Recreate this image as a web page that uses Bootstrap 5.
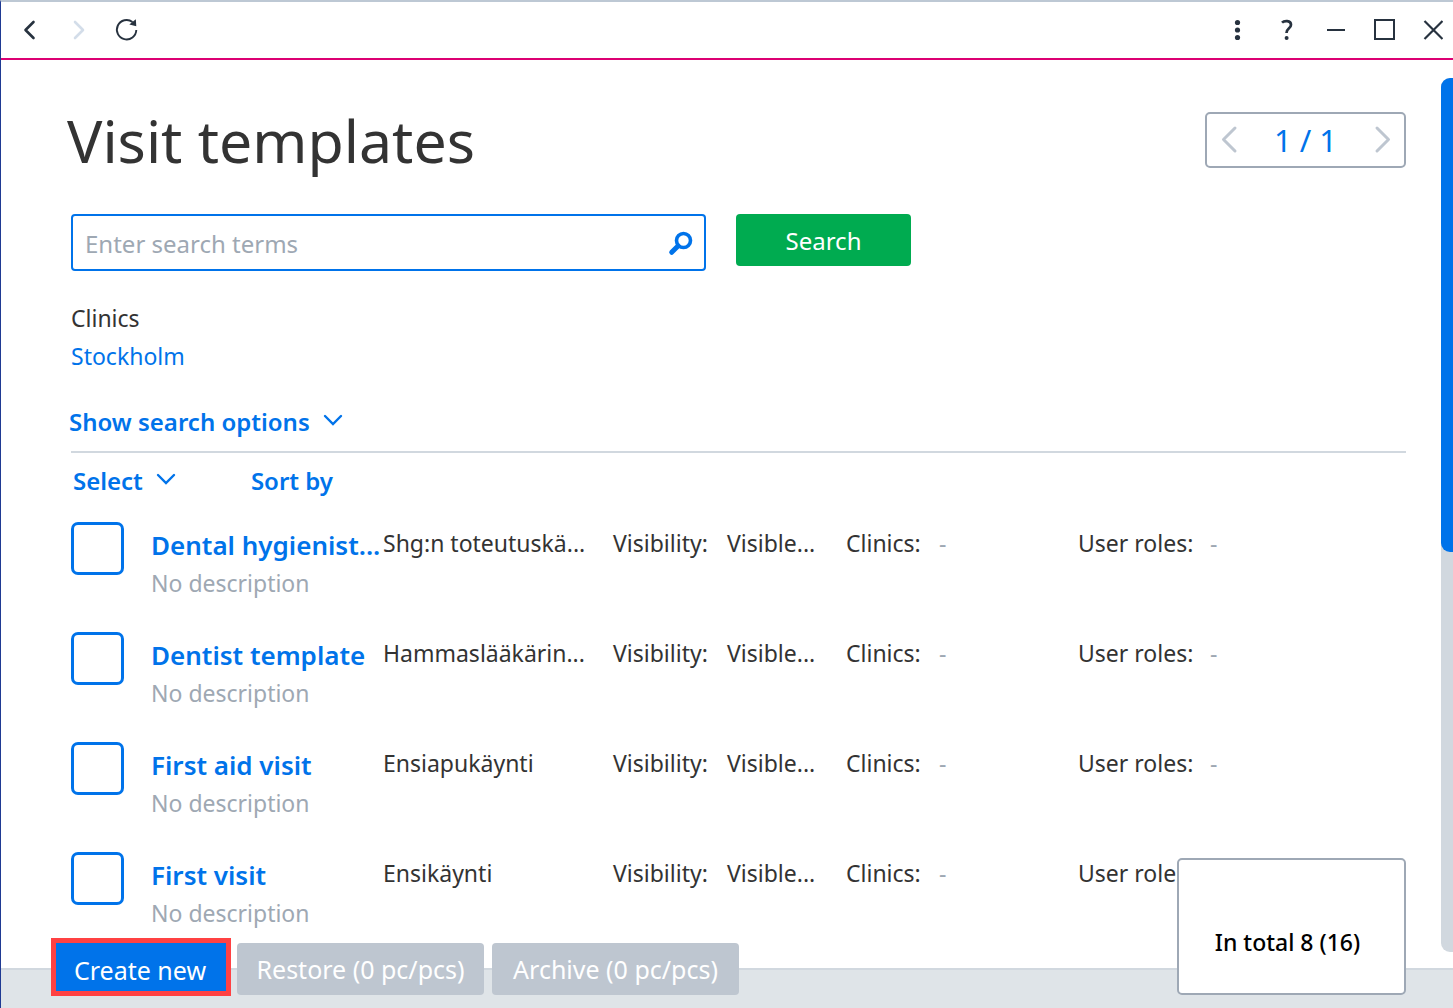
<!DOCTYPE html>
<html lang="en">
<head>
<meta charset="utf-8">
<meta name="viewport" content="width=device-width, initial-scale=1">
<title>Visit templates</title>
<link href="https://cdn.jsdelivr.net/npm/bootstrap@5.3.0/dist/css/bootstrap.min.css" rel="stylesheet">
<style>
  :root { --blue: #0073ea; --ink: #333; --muted: #9ea8b3; --line: #d1d8df; --frame: #9ea8b5; --icon: #27323f; }
  body { font-family: "Noto Sans", "Open Sans", sans-serif; font-size: 23px; line-height: 38px; color: var(--ink); }
  svg { display: block; fill: none; }
  .plain-btn { background: none; border: 0; padding: 0; color: inherit; line-height: inherit; }
  a, .blue-text { color: var(--blue); text-decoration: none; }
  .app { border-top: 2px solid #bdc8d4; border-left: 1px solid #1f3a93; }
  .titlebar { height: 58px; border-bottom: 2px solid #dc0073; padding: 0 10px 0 20px; color: var(--icon); }
  .content { padding: 50px 0 0 70px; min-width: 0; }
  .page-title { font-size: 59px; line-height: 60px; font-weight: 400; margin: 0 0 44px -4px; }
  .pager { width: 201px; height: 56px; margin-top: 2px; border: 2px solid var(--frame); border-radius: 5px; padding: 0 13px; font-size: 31px; }
  .search-form { gap: 30px; }
  .search-group { flex: 0 1 635px; height: 57px; border: 2px solid var(--blue); border-radius: 4px; padding: 0 10px 0 12px; }
  .search-group input { border: 0; padding: 2px 0 0; box-shadow: none; font-size: 24px; }
  .search-group input::placeholder { color: var(--muted); }
  .btn { --bs-btn-border-radius: 4px; --bs-btn-border-width: 0; --bs-btn-padding-y: 7px; --bs-btn-padding-x: 0; font-size: 25px; line-height: 38px; color: #fff; white-space: nowrap; }
  .btn-find { background: #00ab50; width: 175px; font-size: 24px; padding: 8px 0 6px; }
  .btn-off, .btn-off:disabled { background: #bec6d0; color: #fff; opacity: 1; width: 247px; }
  .btn-create { background: var(--blue); width: 180px; height: 58px; border: 5px solid #ff4143; border-radius: 0; padding: 6px 2px 0 0; margin: 0 6px -1px 0; }
  .clinic-block { margin-top: 28px; margin-bottom: 28px; }
  .strong-text { font-weight: 600; font-size: 24px; }
  .options-btn { margin-left: -2px; }
  .rule { height: 2px; margin-top: 10px; background: var(--line); }
  .list-tools { padding: 9px 0 0 2px; }
  .options-btn, .select-btn { gap: 12px; }
  .sort-link { margin-left: 74px; }
  .template-list { padding-top: 22px; }
  .template-row { display: grid; height: 110px; align-items: start;
    grid-template-columns: minmax(0, 80fr) minmax(0, 232fr) minmax(0, 230fr) minmax(0, 114fr) minmax(0, 119fr) minmax(0, 93fr) minmax(0, 139fr) minmax(0, 132fr) minmax(0, 196fr); }
  .template-row > * { white-space: nowrap; }
  .pick { width: 53px; height: 53px; margin: 0; border: 3px solid var(--blue); border-radius: 7px !important; }
  .template-name { font-size: 26px; padding-top: 4px; }
  .field { padding-top: 2px; }
  .muted-text { color: var(--muted); }
  .scroll-track { width: 12px; margin: 18px 0 16px 35px; background: var(--line); border-radius: 9px 0 0 9px; }
  .scroll-thumb { height: 54.2%; background: var(--blue); border-radius: 9px 0 0 9px; }
  .bottom-bar { height: 40px; background: #dfe4e8; border-top: 2px solid var(--line); padding: 0 47px 13px 50px; z-index: 2; }
  .total-card { width: 229px; height: 137px; background: #fff; border: 2px solid var(--frame); border-radius: 5px; color: #000; font-weight: 500; padding: 0 8px 32px 0; }
</style>
</head>
<body>
<div class="app vh-100 d-flex flex-column overflow-hidden">
  <header class="titlebar d-flex align-items-center justify-content-between flex-shrink-0">
    <nav class="d-flex align-items-center" aria-label="History">
      <button class="plain-btn" aria-label="Back"><svg width="18" height="22" viewBox="0 0 18 22"><path d="M12.500 3 4.500 11 12.500 19" stroke="currentColor" stroke-width="2.600" stroke-linecap="round" stroke-linejoin="round"/></svg></button>
      <button class="plain-btn ms-4 ps-2" aria-label="Forward"><svg width="18" height="22" viewBox="0 0 18 22"><path d="M4 3 12 11 4 19" stroke="#d3dde9" stroke-width="2.600" stroke-linecap="round" stroke-linejoin="round"/></svg></button>
      <button class="plain-btn ms-4" aria-label="Reload"><svg width="26" height="24" viewBox="0 0 26 24"><path d="M23.300 12A9.700 9.700 0 1 1 19.500 4" stroke="currentColor" stroke-width="1.900"/><path d="M16.300 6.500 22.800 1.300 23.300 8.200Z" fill="currentColor"/></svg></button>
    </nav>
    <div class="d-flex align-items-center gap-4">
      <button class="plain-btn" aria-label="More"><svg width="24" height="24" viewBox="0 0 24 24"><g fill="currentColor"><circle cx="10.500" cy="4.500" r="2.600"/><circle cx="10.500" cy="12" r="2.600"/><circle cx="10.500" cy="19.500" r="2.600"/></g></svg></button>
      <button class="plain-btn" aria-label="Help"><svg width="24" height="24" viewBox="0 0 24 24"><path d="M7 4.600C9 2.600 16 1.900 16 6.700C16 10.500 11.500 10 11.500 15" stroke="currentColor" stroke-width="2.700"/><circle cx="11.600" cy="20.100" r="2" fill="currentColor"/></svg></button>
      <button class="plain-btn" aria-label="Minimise"><svg width="24" height="24" viewBox="0 0 24 24"><path d="M4 12H22" stroke="currentColor" stroke-width="2"/></svg></button>
      <button class="plain-btn" aria-label="Maximise"><svg width="24" height="24" viewBox="0 0 24 24"><path d="M4 2H23V21H4Z" stroke="currentColor" stroke-width="2"/></svg></button>
      <button class="plain-btn" aria-label="Close"><svg width="24" height="24" viewBox="0 0 24 24"><path d="M5.500 3 23.500 21M23.500 3 5.500 21" stroke="currentColor" stroke-width="2.200"/></svg></button>
    </div>
  </header>

  <div class="d-flex flex-grow-1 overflow-hidden">
    <main class="content flex-grow-1 overflow-hidden">
      <div class="d-flex justify-content-between align-items-start">
        <h1 class="page-title">Visit templates</h1>
        <div class="pager d-flex align-items-center justify-content-between blue-text">
          <button class="plain-btn" aria-label="Previous page"><svg width="18" height="30" viewBox="0 0 18 30"><path d="M15 3 3.500 14.500 15 26" stroke="#bec6d0" stroke-width="3" stroke-linecap="round" stroke-linejoin="round"/></svg></button>
          <span>1 / 1</span>
          <button class="plain-btn" aria-label="Next page"><svg width="18" height="30" viewBox="0 0 18 30"><path d="M4 3 15.500 14.500 4 26" stroke="#bec6d0" stroke-width="3" stroke-linecap="round" stroke-linejoin="round"/></svg></button>
        </div>
      </div>

      <form class="search-form d-flex align-items-start" onsubmit="return false">
        <div class="search-group d-flex align-items-center">
          <input class="form-control" type="text" placeholder="Enter search terms" aria-label="Search terms">
          <svg class="flex-shrink-0" width="26" height="26" viewBox="0 0 26 26"><circle cx="15.500" cy="10.500" r="7" stroke="#0073ea" stroke-width="3.600"/><path d="M10 16 3.700 22.300" stroke="#0073ea" stroke-width="5" stroke-linecap="round"/></svg>
        </div>
        <button class="btn btn-find">Search</button>
      </form>

      <div class="clinic-block">
        <div>Clinics</div>
        <a class="d-block" href="#">Stockholm</a>
      </div>

      <button class="plain-btn options-btn blue-text strong-text d-flex align-items-center">Show search options
        <svg width="22" height="20" viewBox="0 0 22 20"><path d="M3 4 11 12 19 4" stroke="currentColor" stroke-width="2.400" stroke-linecap="round"/></svg></button>
      <div class="rule"></div>

      <div class="list-tools d-flex align-items-center">
        <button class="plain-btn select-btn blue-text strong-text d-flex align-items-center">Select
          <svg width="22" height="20" viewBox="0 0 22 20"><path d="M3 4 11 12 19 4" stroke="currentColor" stroke-width="2.400" stroke-linecap="round"/></svg></button>
        <a class="sort-link strong-text" href="#">Sort by</a>
      </div>

      <ul class="template-list list-unstyled mb-0">
        <li class="template-row">
          <input class="form-check-input pick" type="checkbox" aria-label="Dental hygienist template">
          <div><a class="strong-text template-name d-block" href="#">Dental hygienist...</a><div class="muted-text">No description</div></div>
          <div class="field">Shg:n toteutuskä...</div><div class="field">Visibility:</div><div class="field">Visible...</div>
          <div class="field">Clinics:</div><div class="field muted-text">-</div><div class="field">User roles:</div><div class="field muted-text">-</div>
        </li>
        <li class="template-row">
          <input class="form-check-input pick" type="checkbox" aria-label="Dentist template">
          <div><a class="strong-text template-name d-block" href="#">Dentist template</a><div class="muted-text">No description</div></div>
          <div class="field">Hammaslääkärin...</div><div class="field">Visibility:</div><div class="field">Visible...</div>
          <div class="field">Clinics:</div><div class="field muted-text">-</div><div class="field">User roles:</div><div class="field muted-text">-</div>
        </li>
        <li class="template-row">
          <input class="form-check-input pick" type="checkbox" aria-label="First aid visit">
          <div><a class="strong-text template-name d-block" href="#">First aid visit</a><div class="muted-text">No description</div></div>
          <div class="field">Ensiapukäynti</div><div class="field">Visibility:</div><div class="field">Visible...</div>
          <div class="field">Clinics:</div><div class="field muted-text">-</div><div class="field">User roles:</div><div class="field muted-text">-</div>
        </li>
        <li class="template-row">
          <input class="form-check-input pick" type="checkbox" aria-label="First visit">
          <div><a class="strong-text template-name d-block" href="#">First visit</a><div class="muted-text">No description</div></div>
          <div class="field">Ensikäynti</div><div class="field">Visibility:</div><div class="field">Visible...</div>
          <div class="field">Clinics:</div><div class="field muted-text">-</div><div class="field">User roles:</div><div class="field muted-text">-</div>
        </li>
      </ul>
    </main>
    <div class="scroll-track flex-shrink-0"><div class="scroll-thumb"></div></div>
  </div>

  <footer class="bottom-bar d-flex align-items-end flex-shrink-0 position-relative">
    <button class="btn btn-create">Create new</button>
    <button class="btn btn-off me-2" disabled>Restore (0 pc/pcs)</button>
    <button class="btn btn-off" disabled>Archive (0 pc/pcs)</button>
    <div class="total-card ms-auto d-flex align-items-end justify-content-center">In total 8 (16)</div>
  </footer>
</div>
<script src="https://cdn.jsdelivr.net/npm/bootstrap@5.3.0/dist/js/bootstrap.bundle.min.js"></script>
</body>
</html>
